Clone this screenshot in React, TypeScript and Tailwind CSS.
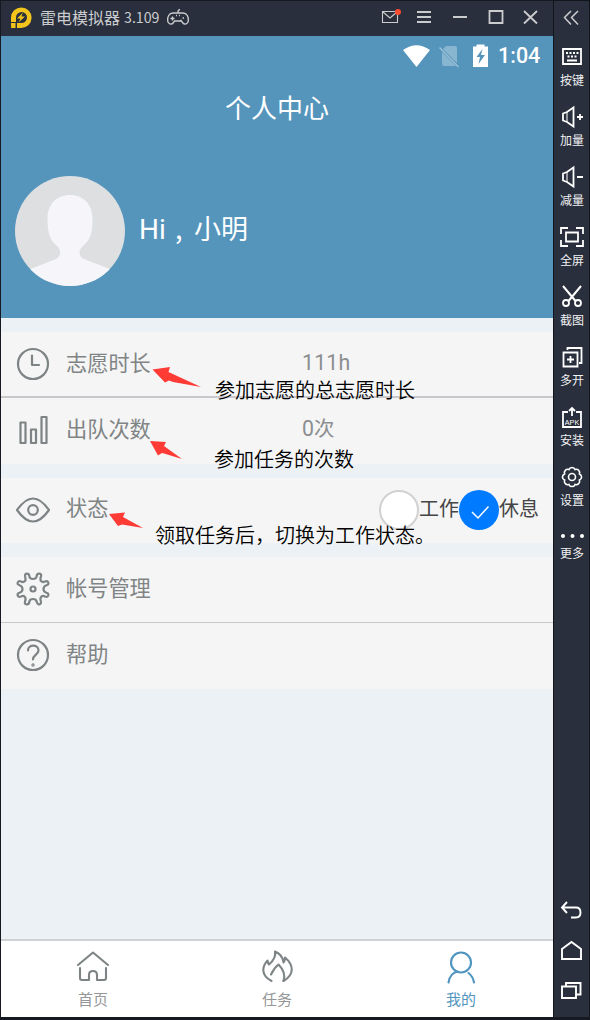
import type { ReactNode } from 'react';

const CJK = "font-['Noto_Sans_CJK_SC',sans-serif]";

function SideItem({ label, children }: { label: string; children: ReactNode }) {
  return (
    <div className="flex h-[60px] flex-col items-center gap-1">
      <svg width="24" height="24" viewBox="0 0 24 24" fill="none" stroke="#fff" strokeWidth="1.8" className="shrink-0">
        {children}
      </svg>
      <span className="text-[12px] leading-[14px] whitespace-nowrap text-[#f1f2f3]">{label}</span>
    </div>
  );
}

function RowIcon({ children }: { children: ReactNode }) {
  return (
    <svg width="36" height="36" viewBox="0 0 36 36" fill="none" stroke="#7e8485" strokeWidth="2.2" strokeLinecap="round" strokeLinejoin="round" className="shrink-0">
      {children}
    </svg>
  );
}

function Row({ icon, label, className, children }: { icon: ReactNode; label: string; className: string; children?: ReactNode }) {
  return (
    <div className={`flex shrink-0 items-center bg-[#f5f5f5] pl-[14px] ${className}`}>
      {icon}
      <span className="ml-[15px] w-[236px] shrink-0 pb-[5px] text-[21.2px] leading-8 text-[#808485]">{label}</span>
      {children}
    </div>
  );
}

function Note({ text, className }: { text: string; className: string }) {
  return <div className={`absolute text-[20px] leading-6 font-[350] whitespace-nowrap text-black ${className}`}>{text}</div>;
}

function Tab({ label, color, className, children }: { label: string; color: string; className: string; children: ReactNode }) {
  return (
    <div className={`flex flex-1 flex-col items-center pt-[8px] ${className}`}>
      <svg width="36" height="36" viewBox="0 0 36 36" fill="none" stroke={color} strokeWidth="2.1" strokeLinecap="round" strokeLinejoin="round">
        {children}
      </svg>
      <span className="mt-[5px] text-[15px] leading-[18px]">{label}</span>
    </div>
  );
}

export default function App() {
  return (
    <div className={`relative flex h-[1020px] w-[590px] overflow-hidden bg-[#161921] ${CJK}`}>
      <div className="flex h-[1017px] w-[553px] shrink-0 flex-col border-t border-l border-[#161921]">
        <header className="flex h-[35px] shrink-0 items-center bg-[#292f3c] pl-[9px] text-[#cbccce]">
          <svg width="22" height="22" viewBox="0 0 22 22" className="mb-[2px] shrink-0">
            <path d="M1 10.5A10.3 10.3 0 1 1 11.3 21H7v-5h4a5.5 5.5 0 1 0-5-5.5V15H1z" fill="#f3c51c" />
            <path d="M1 16h4.5v5H.8c.5-1 .6-2 .2-2.800z" fill="#f3c51c" />
            <path d="m13 5.500-6 6h3.500L8.500 15.500l6.500-6h-3.600z" fill="#f3c51c" />
          </svg>
          <span className="ml-[8px] pb-[3px] text-[16px] leading-6 whitespace-nowrap">雷电模拟器</span>
          <span className="ml-[4px] w-[35px] pb-[3px] text-[14.200px] leading-6">3.109</span>
          <svg width="24" height="20" viewBox="0 0 24 20" fill="none" stroke="#cbccce" strokeWidth="1.4" className="mb-[2px] ml-[7px] shrink-0">
            <path d="M12 5V3.500q0-1.500 2-2M7 5h10c4 0 5.800 4 5.300 8-.4 3-3.700 4.200-5.600 1.800L15.500 13h-7l-1.200 1.800C5.400 17.200 2.100 16 1.700 13 1.200 9 3 5 7 5z" />
            <path d="M4.500 10.500h4M6.500 8.500v4M14 12.500h1.500M16.500 10h1.500M10 7.500h1M13 7.500h1" />
          </svg>
          <div className="flex-1" />
          <svg width="160" height="24" viewBox="380 5 160 24" fill="none" stroke="#cbccce" strokeWidth="2" className="mr-[13px] mb-[3px] shrink-0">
            <path d="M382.500 11.500h15v11h-15zM383 12l7 6 7-6" strokeWidth="1.100" />
            <circle cx="398" cy="12" r="3" fill="#fb4a30" stroke="none" />
            <path d="M417 12h14M417 17h14M417 22h14M453 17h14M489.500 11h13v12h-13z" strokeWidth="1.800" />
            <path d="m524 11 13 12.500M537 11l-13 12.500" strokeWidth="1.800" />
          </svg>
        </header>

        <section className="flex h-[282px] shrink-0 flex-col bg-[#5595bc] text-white">
          <div className="flex h-[40px] items-center justify-end pr-[13px]">
            <svg width="88" height="24" viewBox="402 43 88 24" className="shrink-0">
              <path d="M403 49q13.500-9.500 27 0L416.500 66z" fill="#fff" />
              <path d="M446 45h9q2 0 2 2v15L443 48zM442 51l14 14h-12q-2 0-2-2z" fill="#fff" opacity=".3" />
              <path d="m439.500 46.500 19 19.500" stroke="#fff" strokeWidth="1.500" opacity=".4" />
              <path d="M473 45.500h3.500V43.500h8v2H488V66h-15z" fill="#fff" />
              <path d="m482.500 48-6 8h3.500l-1.500 7 6.500-9h-4z" fill="#5595bc" />
            </svg>
            <span className="ml-[8px] w-[42px] font-['Roboto',sans-serif] text-[21.500px] leading-8 font-medium">1:04</span>
          </div>
          <h1 className="mt-[12px] text-center text-[26px] leading-[38px] font-normal">个人中心</h1>
          <div className="mt-[49px] flex h-[112px] items-center pl-[13px]">
            <svg width="112" height="112" viewBox="0 0 112 112" className="shrink-0">
              <defs>
                <clipPath id="avatar"><circle cx="56" cy="56" r="55" /></clipPath>
              </defs>
              <circle cx="56" cy="56" r="55" fill="#dddfe1" />
              <path clipPath="url(#avatar)" d="M56 20C42 20 33 30 33.500 45c.3 13 2.500 20 8.500 25 6 5 5 11 0 14L15 94.500V112h82V94.500L70 84c-6-3-6-9 0-14 6-5 8.500-12 8.500-25C79 30 70 20 56 20z" fill="#f5f5fa" />
            </svg>
            <div className="ml-[13px] flex items-baseline pb-[5px] text-[27px] leading-10">
              <span className="w-[36px] font-['Roboto',sans-serif] text-[28px]">Hi</span>
              <span className="w-[19px]">,</span>
              <span>小明</span>
            </div>
          </div>
        </section>

        <main className="flex flex-1 flex-col bg-[#ecf1f6] pt-[14px]">
          <Row
            className="h-[66px] border-b-2 border-[#c8c7cc]"
            label="志愿时长"
            icon={<RowIcon><circle cx="18" cy="18" r="15" /><path d="M17 9.500V19h7" /></RowIcon>}
          >
            <span className="pb-[3px] font-['Roboto',sans-serif] text-[21.300px] leading-8 tracking-[0.200px] text-[#8b8e90]">111h</span>
          </Row>
          <Row
            className="h-[66px] pb-[2px]"
            label="出队次数"
            icon={<RowIcon><path d="M5.500 10.500h5V31h-5zM16 17.500h5V31h-5zM26.500 5h5v26h-5z" /></RowIcon>}
          >
            <span className="pb-[5px] text-[20.500px] leading-8 text-[#8b8e90]"><span className="font-['Roboto',sans-serif] text-[21.300px]">0</span>次</span>
          </Row>
          <Row
            className="mt-[14px] h-[65px] pb-[2px]"
            label="状态"
            icon={<RowIcon><path d="M2 18C8 9.500 13 6.500 18 6.500S28 9.500 34 18C28 26.500 23 29.500 18 29.500S8 26.500 2 18z" /><circle cx="18" cy="18" r="4.800" /></RowIcon>}
          >
            <div className="flex flex-1 items-center justify-end pr-[14px] text-[20px] leading-8 text-[#454545]">
              <div className="size-[40px] rounded-full border-2 border-[#d1d1d1] bg-white" />
              <span className="pb-[3px]">工作</span>
              <div className="flex size-[40px] items-center justify-center rounded-full bg-[#007aff]">
                <svg width="20" height="16" viewBox="0 0 20 16" fill="none" stroke="#fff" strokeWidth="1.500" className="mt-1 ml-0.5">
                  <path d="m2 8 6 6L18.500 2.500" />
                </svg>
              </div>
              <span className="pb-[3px]">休息</span>
            </div>
          </Row>
          <Row
            className="mt-[14px] h-[66px] border-b border-[#c8c7cc] pb-px"
            label="帐号管理"
            icon={
              <RowIcon>
                <path d="M11.500 2.700Q14 2.500 14.300 5C14.600 9 21.400 9 21.700 5Q22 2.500 24.500 2.700T25.800 6C24.500 10 27 12 30 10.500Q32.500 9.500 33.300 11.500T31.500 14.200C27.500 15.500 27.500 20.500 31.500 21.800Q34 22.500 33.300 24.500T30 25.500C27 24 24.500 26 25.800 30Q26.500 33 24.500 33.300T21.700 31C21.400 27 14.600 27 14.300 31Q14 33.500 11.500 33.300T10.200 30C11.500 26 9 24 6 25.500Q3.500 26.500 2.700 24.500T4.500 21.800C8.500 20.500 8.500 15.500 4.500 14.200Q2 13.500 2.700 11.500T6 10.500C9 12 11.500 10 10.200 6Q9.500 3 11.500 2.700z" />
                <circle cx="18" cy="18" r="2.500" />
              </RowIcon>
            }
          />
          <Row
            className="h-[66px] pb-[2px]"
            label="帮助"
            icon={<RowIcon><circle cx="18" cy="18" r="15" /><path d="M13 13.500C13 7 23.500 7 23.500 13.500c0 4-5.500 4.500-5.500 9" /><circle cx="18" cy="28" r=".6" /></RowIcon>}
          />
        </main>

        <nav className="flex h-[78px] shrink-0 border-t-2 border-[#cfd2d5] bg-white">
          <Tab label="首页" color="#7e8485" className="text-[#949698]">
            <path d="M3 16 18 3.500 33 16M5 19v10q0 2 2 2h7v-5q0-4 4-4t4 4v5h7q2 0 2-2V19" />
          </Tab>
          <Tab label="任务" color="#7e8485" className="text-[#949698]">
            <path d="M12.500 32C1 26 3.500 17 8.500 11.500q.5 3 1.500 4C14 12 17 7 16 2.500c5 2 8 6 8.500 11q1.500-1.500 1.500-5C35 16 35.500 26 24.500 32" />
            <path d="M12 25.500Q15 19 19.500 15.500C24.500 20.500 26.500 26 24.500 32" />
          </Tab>
          <Tab label="我的" color="#4f95c0" className="text-[#4f95c0]">
            <circle cx="18" cy="13.500" r="10" />
            <path d="M5.500 33.500C6.500 27.500 10 23.500 14.500 22.500M25.500 24q4.500 3.500 5.500 9.500" />
          </Tab>
        </nav>
      </div>

      <aside className="flex h-[1017px] w-[37px] shrink-0 flex-col items-center border border-b-0 border-[#12151c] bg-[#292f3c] pl-px">
        <div className="flex h-[44px] shrink-0 justify-center pt-[7px]">
          <svg width="20" height="20" viewBox="0 0 20 20" fill="none" stroke="#cbccce" strokeWidth="1.500">
            <path d="m9 3-6.500 6.500L9 16.500M16 3 9.500 9.500l6.500 7" />
          </svg>
        </div>
        <SideItem label="按键">
          <path d="M3 4h18v15H3zM7 15.500h10" />
          <path d="M6 8h13M7.500 11.500h10" strokeDasharray="2 1.500" />
        </SideItem>
        <SideItem label="加量">
          <path d="M3 8.500 7 7l6.500-4.500v19L7 17l-4-1.500zM17 12h6M20 9v6" />
          <path d="M7 7v10" strokeWidth="1" />
        </SideItem>
        <SideItem label="减量">
          <path d="M3 8.500 7 7l6.500-4.500v19L7 17l-4-1.500zM17 12h6" />
          <path d="M7 7v10" strokeWidth="1" />
        </SideItem>
        <SideItem label="全屏">
          <path d="M1 9V3h7M16 3h7v6M23 15v6h-7M8 21H1v-6M6 7.500h12v9H6z" />
        </SideItem>
        <SideItem label="截图">
          <path d="m3 1 12.500 15M21 1 8.500 16" strokeWidth="2" />
          <circle cx="6" cy="18" r="3" />
          <circle cx="18" cy="18" r="3" />
        </SideItem>
        <SideItem label="多开">
          <path d="M3.500 7.500h14v14h-14zM7.500 5V3h14v15H19M7 14.500h7M10.500 11v7" />
        </SideItem>
        <SideItem label="安装">
          <path d="M8 7H3v15h18V7h-5M12 11V3.500M9 6l3-3 3 3" />
          <text x="12" y="19.500" textAnchor="middle" fontSize="7.200" fill="#fff" stroke="none" fontFamily="Liberation Sans">APK</text>
        </SideItem>
        <SideItem label="设置">
          <path d="M8.900 4.600A3.300 3.300 0 0 1 15.100 4.600 3.300 3.300 0 0 1 19.400 8.900 3.300 3.300 0 0 1 19.400 15.100 3.300 3.300 0 0 1 15.100 19.400 3.300 3.300 0 0 1 8.900 19.400 3.300 3.300 0 0 1 4.600 15.100 3.300 3.300 0 0 1 4.600 8.900 3.300 3.300 0 0 1 8.900 4.600z" strokeWidth="1.600" />
          <circle cx="12" cy="12" r="3.500" strokeWidth="1.600" />
        </SideItem>
        <div className="flex flex-col items-center">
          <svg width="24" height="21" viewBox="0 0 24 21" fill="#fff">
            <circle cx="3" cy="11" r="2" />
            <circle cx="12.500" cy="11" r="2" />
            <circle cx="22" cy="11" r="2" />
          </svg>
          <span className="text-[12px] leading-[14px] text-[#f1f2f3]">更多</span>
        </div>
        <div className="flex-1" />
        <div className="mb-[14px] flex flex-col gap-4">
          <svg width="24" height="24" viewBox="0 0 24 24" fill="none" stroke="#fff" strokeWidth="1.900">
            <path d="M7 3 2 8.500 7 14M2 8.500h14q4.500 0 4.500 5t-4.500 5h-5" />
          </svg>
          <svg width="24" height="24" viewBox="0 0 24 24" fill="none" stroke="#fff" strokeWidth="1.900">
            <path d="M2 20V10l9.500-7L21 10v10z" />
          </svg>
          <svg width="24" height="24" viewBox="0 0 24 24" fill="none" stroke="#fff" strokeWidth="1.900">
            <path d="M2 7.500h14V19H2zM6 7V4h14.500v11.500H16" />
          </svg>
        </div>
      </aside>

      <Note text="参加志愿的总志愿时长" className="top-[378px] left-[215px]" />
      <Note text="参加任务的次数" className="top-[447px] left-[214px]" />
      <Note text="领取任务后，切换为工作状态。" className="top-[523px] left-[155px]" />
      <svg width="60" height="24" viewBox="150 365 60 24" className="absolute top-[365px] left-[150px]" fill="#ff3b36">
        <path d="m152.500 369.500 17.500-2.500-1.500 5L201 387l-28-5-4-1.500-4 2z" />
      </svg>
      <svg width="40" height="24" viewBox="148 438 40 24" className="absolute top-[438px] left-[148px]" fill="#ff3b36">
        <path d="m150 441 16 1-2 4 18 13-18-5.500-2-.5-4 2.500z" />
      </svg>
      <svg width="40" height="24" viewBox="107 509 40 24" className="absolute top-[509px] left-[107px]" fill="#ff3b36">
        <path d="m109 514 16-1.500-2 4.500 20 11-18-3-3-.5-4 1.500z" />
      </svg>
    </div>
  );
}
